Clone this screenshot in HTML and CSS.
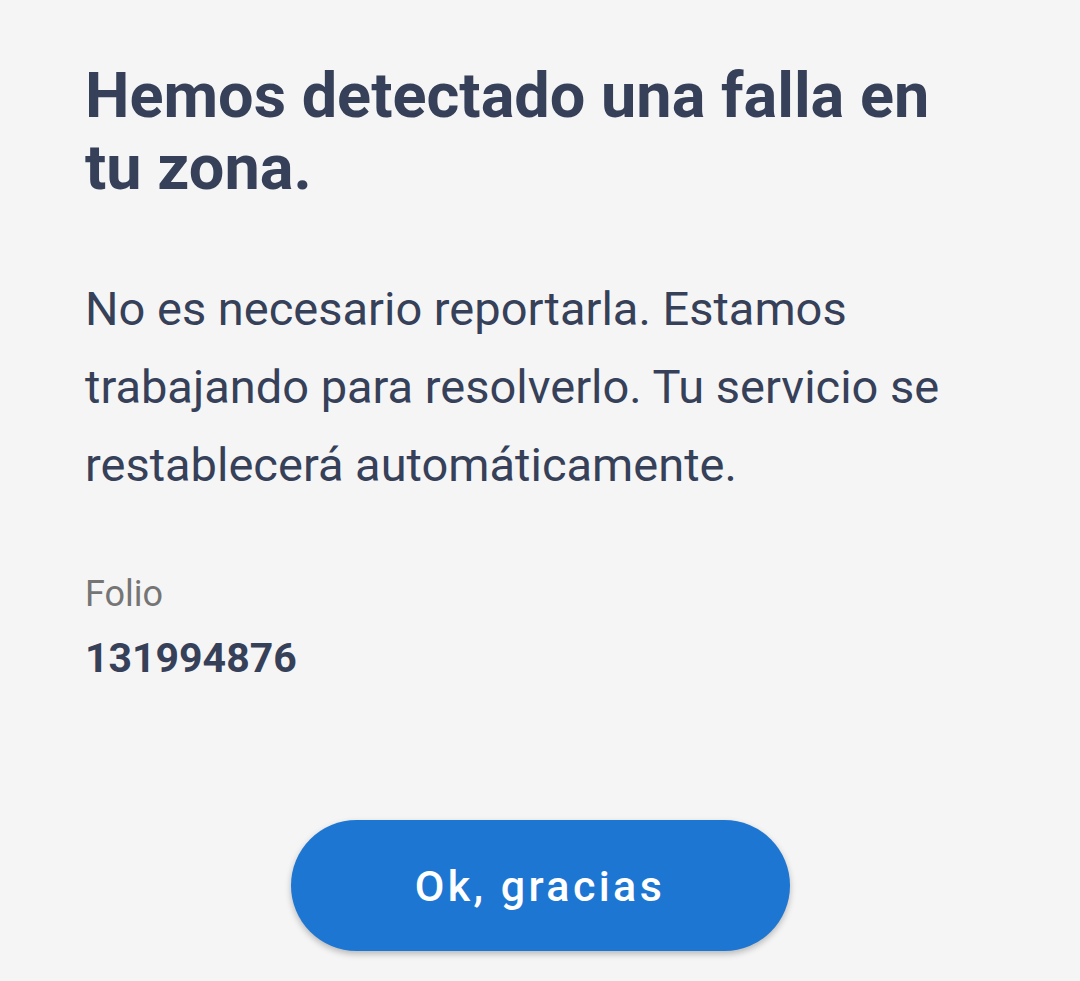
FILE: index.html
```html
<!DOCTYPE html>
<html lang="es">
<head>
    <meta charset="UTF-8">
    <meta name="viewport" content="width=device-width, initial-scale=1.0">
    <title>Falla detectada</title>
    <link rel="stylesheet" href="styles.css">
</head>
<body>
    <div class="dialog">
        <h1 class="title">Hemos detectado una falla en tu zona.</h1>
        <p class="message">No es necesario reportarla. Estamos trabajando para resolverlo. Tu servicio se restablecerá automáticamente.</p>

        <div class="folio">
            <span class="folio-label">Folio</span>
            <span class="folio-number">131994876</span>
        </div>

        <div class="actions">
            <button type="button" class="ok-btn">Ok, gracias</button>
        </div>
    </div>
</body>
</html>
```

FILE: styles.css
```css
* {
    box-sizing: border-box;
}
body {
    margin: 0;
    background-color: #f5f5f5;
    font-family: Roboto, "Noto Sans", sans-serif;
    color: #364159;
}
.dialog {
    padding: 60px 85px 0 85px;
    width: 1080px;
    height: 981px;
}
.title {
    margin: 0;
    font-size: 63px;
    font-weight: 700;
    line-height: 72px;
    max-width: 900px;
}
.message {
    margin: 66px 0 0 0;
    font-size: 47px;
    line-height: 78px;
    max-width: 900px;
}
.folio {
    display: flex;
    flex-direction: column;
    margin-top: 68px;
    gap: 19px;
}
.folio-label {
    font-size: 36px;
    color: #757575;
    line-height: 44px;
}
.folio-number {
    font-size: 41px;
    font-weight: 700;
    line-height: 46px;
}
.actions {
    display: flex;
    justify-content: center;
    margin-top: 139px;
    margin-left: -85px;
    margin-right: -85px;
}
.ok-btn {
    width: 499px;
    height: 131px;
    border: none;
    border-radius: 66px;
    background-color: #1e76d3;
    color: #fff;
    font-family: Roboto, "Noto Sans", sans-serif;
    font-size: 43px;
    font-weight: 500;
    letter-spacing: 3.4px;
    box-shadow: 0 3px 6px rgba(0, 0, 0, 0.25);
    cursor: pointer;
}
```
